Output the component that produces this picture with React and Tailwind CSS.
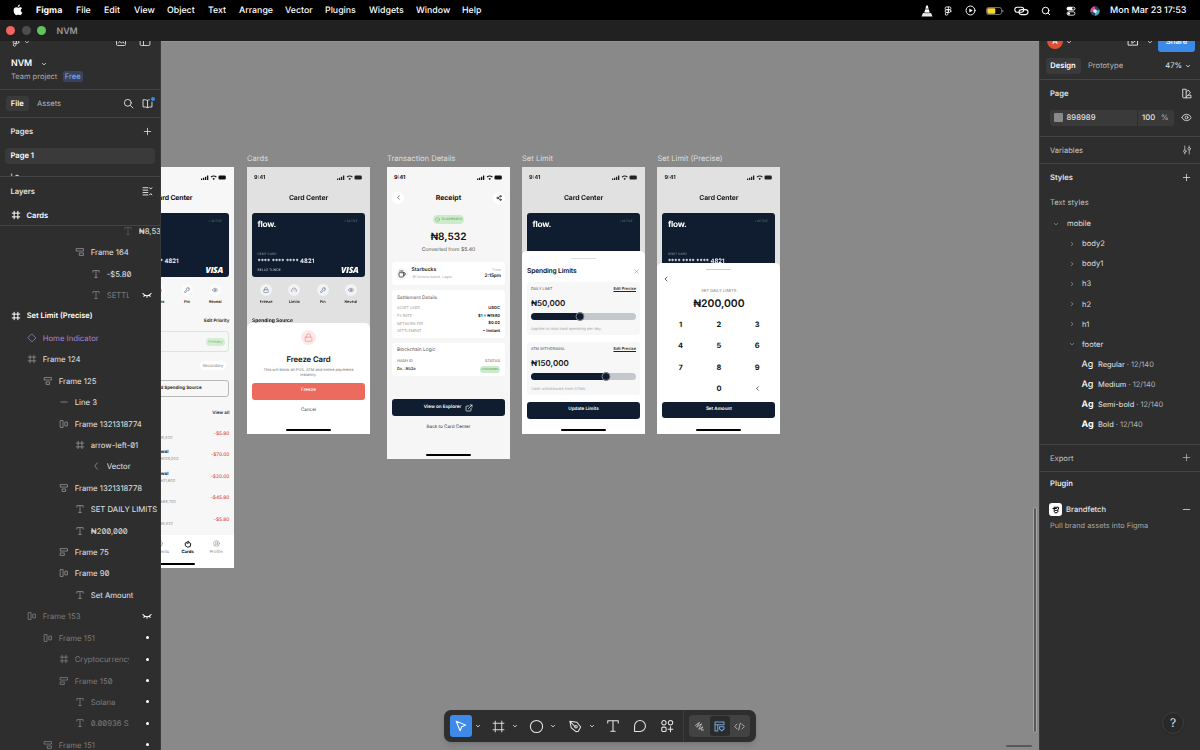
import React from 'react';
import clsx from 'clsx';
import { ChevronLeft, Eye, Frame, KeyRound, Lock, Plus, Minus, Search, Share2, ExternalLink, Coffee, X, CircleCheck, MapPin, CircleUserRound, Gauge } from 'lucide-react';

const MENU = [
  ['Figma', 'w-[40px] font-bold'],
  ['File', 'w-[28px]'],
  ['Edit', 'w-[30px]'],
  ['View', 'w-[33px]'],
  ['Object', 'w-[41px]'],
  ['Text', 'w-[31px]'],
  ['Arrange', 'w-[46px]'],
  ['Vector', 'w-[40px]'],
  ['Plugins', 'w-[44px]'],
  ['Widgets', 'w-[47px]'],
  ['Window', 'w-[46px]'],
  ['Help', 'w-[30px]'],
];

const LAYERS = [
  { depth: 7, icon: 'text', name: '₦8,532', dimIcon: true },
  { depth: 4, icon: 'right', name: 'Frame 164' },
  { depth: 5, icon: 'text', name: '-$5.80' },
  { depth: 5, icon: 'text', name: 'SETTLEMENT', hidden: 'eye' },
  { depth: 0, icon: 'frame', name: 'Set Limit (Precise)', root: true },
  { depth: 1, icon: 'diamond', name: 'Home Indicator', component: true },
  { depth: 1, icon: 'frame', name: 'Frame 124' },
  { depth: 2, icon: 'center', name: 'Frame 125' },
  { depth: 3, icon: 'line', name: 'Line 3' },
  { depth: 3, icon: 'row', name: 'Frame 1321318774' },
  { depth: 4, icon: 'frame', name: 'arrow-left-01' },
  { depth: 5, icon: 'vector', name: 'Vector' },
  { depth: 3, icon: 'center', name: 'Frame 1321318778' },
  { depth: 4, icon: 'text', name: 'SET DAILY LIMITS' },
  { depth: 4, icon: 'text', name: '₦200,000' },
  { depth: 3, icon: 'left', name: 'Frame 75' },
  { depth: 3, icon: 'row', name: 'Frame 90' },
  { depth: 4, icon: 'text', name: 'Set Amount' },
  { depth: 1, icon: 'row', name: 'Frame 153', hidden: 'eye' },
  { depth: 2, icon: 'row', name: 'Frame 151', hidden: 'dot' },
  { depth: 3, icon: 'frame', name: 'Cryptocurrency', hidden: 'dot' },
  { depth: 3, icon: 'left', name: 'Frame 150', hidden: 'dot' },
  { depth: 4, icon: 'text', name: 'Solana', hidden: 'dot' },
  { depth: 4, icon: 'text', name: '0.00936 SOL', hidden: 'dot' },
  { depth: 2, icon: 'right', name: 'Frame 151', hidden: 'dot' },
];

function Svg({ size = 10, box = 16, sw = 1.3, className, children }) {
  return (
    <svg width={size} height={size} viewBox={`0 0 ${box} ${box}`} fill="none" stroke="currentColor" strokeWidth={sw} strokeLinecap="round" strokeLinejoin="round" className={clsx('shrink-0', className)}>
      {children}
    </svg>
  );
}

function Caret({ className }) {
  return (
    <Svg size={6} box={8} sw={1.2} className={className}>
      <path d="M2 3.200 4 5.200 6 3.200" />
    </Svg>
  );
}

const LAYER_SHAPES = {
  text: <path d="M3 5V2.500h10V5M8 2.500v11M6 13.500h4" />,
  frame: <path d="M5 2v12M11 2v12M2 5h12M2 11h12" />,
  diamond: <path d="M8 1.800 14.200 8 8 14.200 1.800 8z" />,
  center: <path d="M2.500 2.500h11v4h-11zM5.500 9.500h5v4h-5z" />,
  left: <path d="M2.500 2.500h11v4h-11zM2.500 9.500h6v4h-6z" />,
  right: <path d="M2.500 2.500h11v4h-11zM7.500 9.500h6v4h-6z" />,
  row: <path d="M2.500 2.500h4v11h-4zM10 5h3.500v6H10z" />,
  line: <path d="M3 8h10" />,
  vector: <path d="M10 3 6 8l4 5" />,
};

function ClosedEye() {
  return (
    <Svg sw={1.7} className="text-white">
      <path d="M1.500 5.500c3.500 5 9.500 5 13 0M4.200 8.500l-1.200 1.700M8 9.500v2M11.800 8.500l1.200 1.700" />
    </Svg>
  );
}

function LayerRow({ layer }) {
  const { depth, icon, name, root, component, hidden, dimIcon } = layer;
  return (
    <div className="flex h-[21.430px] shrink-0 items-center" style={{ paddingLeft: 11 + depth * 16 }}>
      <Svg className={clsx(root ? 'text-white' : component ? 'text-[#a284c8]' : dimIcon ? 'text-[#5c5c5c]' : hidden ? 'text-[#858585]' : 'text-[#9a9a9a]')} sw={root ? 1.6 : 1.2}>
        {LAYER_SHAPES[icon]}
      </Svg>
      <span
        className={clsx(
          'ml-[5.700px] min-w-0 flex-1 overflow-hidden whitespace-nowrap leading-[14px]',
          root ? 'text-[7.500px] font-semibold text-white' : 'text-[7.750px]',
          component && 'text-[#a985d4]',
          hidden ? 'text-[#7b7b7b]' : !root && !component && 'text-[#e4e4e4]'
        )}
      >
        {name}
      </span>
      {hidden && (
        <span className="ml-[13px] flex w-[18px] shrink-0 items-center">
          {hidden === 'eye' ? <ClosedEye /> : <span className="ml-[3.500px] size-[3px] rounded-full bg-white" />}
        </span>
      )}
    </div>
  );
}

function MenuBar() {
  return (
    <div className="flex h-5 shrink-0 items-center bg-black pt-px text-[8.800px] font-medium text-white">
      <svg width="10" height="12" viewBox="0 0 24 28" fill="#fff" className="mr-[13px] mb-px ml-[13px]">
        <path d="M16.500 1c.2 3-2.300 5.700-5 5.700C11.200 4 13.700 1.300 16.500 1zM21.700 9.600c-2 1.200-3.100 2.900-3.100 5 0 2.500 1.500 4.600 3.800 5.500-.9 2.800-3.200 6.400-5.600 6.400-1.600 0-2.200-1-4.300-1s-2.800 1-4.300 1C5 26.500 1.500 20.700 1.500 15.400c0-5 3.200-7.800 6.400-7.800 2 0 3.500 1.300 4.700 1.300 1.100 0 2.900-1.400 5.100-1.400 1 0 3 .4 4 2.100z" />
      </svg>
      {MENU.map(([label, cls]) => (
        <span key={label} className={clsx('shrink-0 whitespace-nowrap', cls)}>{label}</span>
      ))}
      <div className="ml-auto flex items-center pr-[12px]">
        <svg width="12" height="12" viewBox="0 0 24 24" className="mr-[10px]">
          <path d="M10.500 1h3l1.400 5H9.100zM8 10h8l1.200 4H6.800z" fill="#fff" />
          <path d="M9.100 6h5.800L16 10H8z" fill="#aaa" />
          <path d="M4 16h16l3 7H1z" fill="#e8e8e8" />
          <path d="M6.800 14h10.400v3H6.800z" fill="#999" />
        </svg>
        <Svg size={10} sw={1.300} className="mr-[12px]">
          <path d="M8 1.500H5.500a2.200 2.200 0 0 0 0 4.400H8zM8 1.500h2.500a2.200 2.200 0 0 1 0 4.400H8M8 5.900H5.500a2.200 2.200 0 0 0 0 4.400H8zM8 10.300H5.500a2.200 2.200 0 1 0 2.500 2.200z" />
          <circle cx="10.500" cy="8.100" r="2.200" />
        </Svg>
        <Svg size={11} sw={1.400} className="mr-[10px]">
          <circle cx="8" cy="8" r="6.500" />
          <path d="M6.300 5v6l5-3z" fill="currentColor" stroke="none" />
        </Svg>
        <svg width="18" height="8" viewBox="0 0 18 8" className="mr-[10.500px]">
          <rect x=".5" y=".5" width="15" height="7" rx="2" fill="none" stroke="#8a8a8a" strokeWidth=".8" />
          <rect x="1.300" y="1.300" width="8" height="5.400" rx="1" fill="#fdd835" />
          <path d="M16.800 2.800v2.400" stroke="#8a8a8a" />
        </svg>
        <svg width="15" height="10" viewBox="0 0 15 10" fill="none" stroke="#fff" strokeWidth="1.100" className="mr-[11.500px]">
          <rect x=".8" y="1.200" width="9" height="5" rx="2.500" />
          <rect x="5" y="3.600" width="9" height="5" rx="2.500" />
        </svg>
        <Search size={10} strokeWidth={2.400} className="mr-[15px]" />
        <svg width="10" height="10" viewBox="0 0 16 16" className="mr-[14px]">
          <rect x="1" y="1" width="14" height="6" rx="3" fill="#fff" />
          <circle cx="11.800" cy="4" r="2" fill="#222" />
          <rect x="1.700" y="9.200" width="12.600" height="5.500" rx="2.700" fill="none" stroke="#fff" strokeWidth="1.300" />
          <circle cx="4.500" cy="12" r="2" fill="#fff" />
        </svg>
        <svg width="10" height="10" viewBox="0 0 16 16" className="mr-[10.500px]">
          <circle cx="8" cy="8" r="7.500" fill="#31405e" />
          <path d="M8 .5A7.500 7.500 0 0 0 1 10l7-2z" fill="#d2508f" />
          <path d="M8 15.500A7.500 7.500 0 0 0 15 6L8 8z" fill="#3bb6bd" />
          <circle cx="8" cy="8" r="3" fill="#dfe9ff" />
        </svg>
        <span className="w-[54px] text-[9px] whitespace-nowrap">Mon Mar 23</span>
        <span className="w-[24px] text-[9px]">17:53</span>
      </div>
    </div>
  );
}

function TitleBar() {
  return (
    <div className="flex h-[21px] shrink-0 items-center bg-[#212121] pl-[6px]">
      <span className="size-[9px] rounded-full bg-[#ee6561]" />
      <span className="ml-[6.500px] size-[9px] rounded-full bg-[#4c4c4c]" />
      <span className="ml-[6.500px] size-[9px] rounded-full bg-[#5ec45c]" />
      <span className="mt-[2px] ml-[10.500px] text-[8.800px] font-semibold text-[#9b9b9b]">NVM</span>
    </div>
  );
}

function LeftPanel() {
  return (
    <aside className="flex w-[161px] shrink-0 flex-col overflow-hidden border-r border-[#393939] bg-[#2e2e2e] text-[7.600px] text-[#e4e4e4] slashed-zero">
      <div className="flex h-[49px] shrink-0 flex-col border-b border-[#444]">
        <div className="flex h-[10px] shrink-0 items-start overflow-hidden pl-[11px] text-[#d0d0d0]">
          <Svg size={10} sw={1.500} className="-mt-[4px]">
            <path d="M8 1.500H5.500a2.200 2.200 0 0 0 0 4.400H8zM8 5.900H5.500a2.200 2.200 0 0 0 0 4.400H8zM8 10.300H5.500a2.200 2.200 0 1 0 2.500 2.200z" />
            <circle cx="10.500" cy="8.100" r="2.200" />
          </Svg>
          <Caret className="mt-[-2.500px] ml-[3px]" />
          <Svg size={12} sw={1.300} className="mt-[-6px] ml-[84.500px]">
            <rect x="2" y="2" width="12" height="12" rx="1.500" />
            <path d="M4 11l2.500-2.500L8.500 11l2-2 1.500 2" />
          </Svg>
          <Svg size={12} sw={1.300} className="mt-[-6px] ml-[12px]">
            <rect x="1.500" y="2" width="13" height="12" rx="1.500" />
            <path d="M6 2v12" />
          </Svg>
        </div>
        <div className="mt-[5.500px] flex h-[14px] items-center pl-[11px]">
          <span className="w-[30px] text-[8.800px] font-semibold text-white">NVM</span>
          <Caret />
        </div>
        <div className="flex h-[12px] items-center pl-[11px]">
          <span className="w-[51.500px] whitespace-nowrap text-[7.500px] text-[#ababab]">Team project</span>
          <span className="flex h-[11px] w-[20.500px] items-center justify-center rounded-[2.500px] bg-[#384361] text-[7.600px] text-[#82b0ee]">Free</span>
        </div>
      </div>
      <div className="flex h-[28px] shrink-0 items-center border-b border-[#444] pl-[6px]">
        <span className="flex h-[15.500px] w-[22.500px] items-center justify-center rounded-[3px] bg-[#3a3a3a] pt-px font-semibold text-white">File</span>
        <span className="ml-[8.500px] pt-px text-[#b3b3b3]">Assets</span>
        <Svg size={11} sw={1.300} className="ml-auto">
          <circle cx="7" cy="7" r="5" />
          <path d="m11 11 3.500 3.500" />
        </Svg>
        <span className="relative mr-[7px] ml-[8px]">
          <Svg size={11} sw={1.300}>
            <path d="M8 3.500C6.500 2.500 4 2.500 1.500 2.500v10.500c2.500 0 5 0 6.500 1 1.500-1 4-1 6.500-1V6M8 3.500V14M8 3.500c.8-.7 1.700-.9 2.700-1" />
          </Svg>
          <span className="absolute top-[-1px] right-[-1.500px] size-[3.500px] rounded-full bg-[#2f8ff5]" />
        </span>
      </div>
      <div className="flex h-[59px] shrink-0 flex-col overflow-hidden border-b border-[#444]">
        <div className="flex h-[27.500px] shrink-0 items-center justify-between pr-[7px] pl-[10.500px] font-semibold">
          Pages
          <Plus size={11} strokeWidth={1.700} />
        </div>
        <div className="mt-[2px] ml-[5px] flex h-[16px] w-[150px] shrink-0 items-center rounded-[3px] bg-[#3a3a3a] pl-[5.500px] font-semibold text-white">Page 1</div>
        <div className="mt-[5.500px] flex h-[16px] shrink-0 items-center pl-[10.500px]">Lo</div>
      </div>
      <div className="flex h-[28px] shrink-0 items-center justify-between pr-[7px] pl-[10.500px] font-semibold">
        <span className="pt-px">Layers</span>
        <Svg size={11} sw={1.400}>
          <path d="M1.500 2.500h7M1.500 6h7M1.500 9.500h7M1.500 13h7M11 2.500l1.700 2 1.700-2M11 13l1.700-2 1.700 2" />
        </Svg>
      </div>
      <div className="flex h-[21px] shrink-0 items-center border-b border-[#444] pl-[11px] font-semibold text-white">
        <Svg sw={1.600}>{LAYER_SHAPES.frame}</Svg>
        <span className="ml-[5.500px] pt-px">Cards</span>
      </div>
      <div className="flex min-h-0 flex-1 flex-col overflow-hidden">
        <div className="-mt-[6px] flex flex-col">
          {LAYERS.map((layer, i) => <LayerRow key={i} layer={layer} />)}
        </div>
      </div>
    </aside>
  );
}

function StyleFolder({ name, open, nested }) {
  return (
    <div className={clsx('flex h-[20.050px] shrink-0 items-center text-[7.600px] text-[#dedede]', nested ? 'pl-[29px]' : 'pl-[13px]')}>
      <Caret className={clsx('text-[#8c8c8c]', !open && '-rotate-90')} />
      <span className={clsx('pt-px', nested ? 'ml-[7px]' : 'ml-[8px]')}>{name}</span>
    </div>
  );
}

function RightPanel() {
  const weights = [['Regular', 'font-normal'], ['Medium', 'font-medium'], ['Semi-bold', 'font-semibold'], ['Bold', 'font-bold']];
  return (
    <aside className="relative flex w-[161px] shrink-0 flex-col overflow-hidden border-l border-[#3a3a3a] bg-[#2e2e2e] text-[7.600px] text-[#e4e4e4]">
      <div className="flex h-[39px] shrink-0 flex-col border-b border-[#444]">
        <div className="flex h-[14px] shrink-0 items-start overflow-hidden pl-[7px]">
          <span className="-mt-[8px] flex size-[16px] shrink-0 items-center justify-center rounded-full bg-[#dd4f33] text-[8px] text-white">A</span>
          <Caret className="mt-[-2px] ml-[3px]" />
          <Svg size={12} sw={1.300} className="mt-[-6px] ml-[55px]">
            <path d="M2 3.500h12v10H2zM6.500 6v5l4-2.500z" />
          </Svg>
          <Caret className="mt-[-2px] ml-[8px]" />
          <span className="-mt-[9px] ml-[5px] flex h-[20px] w-[37px] items-center justify-center rounded-[3px] bg-[#3b8ae8] text-[7.800px] font-medium text-white">Share</span>
        </div>
        <div className="mt-[3px] flex h-[15.500px] items-center pr-[9px] pl-[5.500px]">
          <span className="flex h-full w-[35px] items-center justify-center rounded-[3px] bg-[#3a3a3a] font-semibold text-white">Design</span>
          <span className="ml-[7.500px] text-[#b3b3b3]">Prototype</span>
          <span className="mr-[3px] ml-auto">47%</span>
          <Caret />
        </div>
      </div>
      <div className="flex h-[56.500px] shrink-0 flex-col border-b border-[#444] pr-[8px] pl-[10px]">
        <div className="flex h-[27px] items-center justify-between font-semibold">
          Page
          <Svg size={11} sw={1.300}>
            <path d="M3 1.800h4.500v12.500H3.500a1 1 0 0 1-1-1V2.300zM7.500 6l3-3 3.300 4-6.300 6M10.500 10.500h4v3.800h-7" />
          </Svg>
        </div>
        <div className="mt-[2.500px] flex h-[16px] items-center">
          <div className="flex h-full w-[86.500px] items-center rounded-l-[3px] bg-[#3a3a3a] pl-[3.500px]">
            <span className="mr-[3.500px] size-[9.500px] rounded-[1px] bg-[#898989]" />
            <span className="text-[7.700px] font-medium">898989</span>
          </div>
          <div className="ml-px flex h-full w-[36px] items-center justify-between rounded-r-[3px] bg-[#3a3a3a] pr-[5px] pl-[4.500px]">
            <span className="text-[7.700px] font-medium">100</span>
            <span className="text-[#b3b3b3]">%</span>
          </div>
          <Eye size={11} strokeWidth={1.800} className="ml-auto" />
        </div>
      </div>
      <div className="flex h-[27.500px] shrink-0 items-center justify-between border-b border-[#444] pr-[8px] pl-[10px] text-[#c4c4c4]">
        <span className="pt-px">Variables</span>
        <Svg size={10} sw={1.300}>
          <path d="M4.500 1.500V8M4.500 12v2.500M11.500 1.500V4M11.500 8v6.500" />
          <circle cx="4.500" cy="10" r="2" />
          <circle cx="11.500" cy="6" r="2" />
        </Svg>
      </div>
      <div className="flex h-[280.500px] shrink-0 flex-col border-b border-[#444]">
        <div className="flex h-[27px] shrink-0 items-center justify-between pr-[8px] pl-[10px] font-semibold">
          Styles
          <Plus size={11} strokeWidth={1.700} />
        </div>
        <div className="flex h-[22.500px] shrink-0 items-center pl-[10px] text-[#bdbdbd]">Text styles</div>
        <StyleFolder name="mobile" open />
        {['body2', 'body1', 'h3', 'h2', 'h1'].map(name => <StyleFolder key={name} name={name} nested />)}
        <StyleFolder name="footer" nested open />
        {weights.map(([name, cls]) => (
          <div key={name} className="flex h-[20.050px] shrink-0 items-center pt-px pl-[41.500px]">
            <span className={clsx('w-[16.500px] text-[9px] text-white', cls)}>Ag</span>
            <span className="text-[7.450px] whitespace-nowrap">{name} <span className="text-[#b0b0b0]">· 12/140</span></span>
          </div>
        ))}
      </div>
      <div className="flex h-[27.500px] shrink-0 items-center justify-between border-b border-[#444] pr-[8px] pl-[10px] text-[#c4c4c4]">
        <span className="pt-px">Export</span>
        <Plus size={11} strokeWidth={1.500} />
      </div>
      <div className="flex h-[24px] shrink-0 items-center pl-[10px] font-semibold">Plugin</div>
      <div className="mt-[6px] flex h-[15px] shrink-0 items-center pr-[8px] pl-[9px] font-medium">
        <span className="mr-[4px] flex size-[13px] items-center justify-center rounded-[3px] bg-white text-black">
          <Svg size={8} sw={2}>
            <path d="M4 2.500h9v4L10.500 8l2 2L10 13.500H5.500M2 5h7M4.500 5v6M7 9h2" />
          </Svg>
        </span>
        <span>Brandfetch</span>
        <Minus size={11} strokeWidth={1.700} className="ml-auto" />
      </div>
      <div className="mt-[1.500px] flex h-[14px] shrink-0 items-center pt-px pl-[10px] text-[7.400px] whitespace-nowrap text-[#a9a9a9]">Pull brand assets into Figma</div>
      <div className="absolute right-[16px] bottom-[16px] flex size-[22px] items-center justify-center rounded-full border border-[#3d3d3d] bg-[#292929] text-[12px] shadow">?</div>
    </aside>
  );
}

/* ---------- phone mockups ---------- */

function StatusBar() {
  return (
    <div className="flex h-[20.500px] shrink-0 items-center justify-between pr-[8px] pl-[7px] text-[5.500px] font-bold">
      9:41
      <svg width="25" height="5" viewBox="0 0 25 5" fill="currentColor">
        <path d="M0 3.500h1.300V5H0zM2 2.700h1.300V5H2zM4 1.700h1.300V5H4zM6 .6h1.300V5H6zM12.700 5l-1.200-1.300a1.700 1.700 0 0 1 2.400 0zM9.600 1.700a4.400 4.400 0 0 1 6.200 0l-.8.9a3.200 3.200 0 0 0-4.600 0z" />
        <rect x="17.500" y=".6" width="7.300" height="3.800" rx="1.200" />
      </svg>
    </div>
  );
}

function ScreenTitle({ children }) {
  return <div className="flex h-[20px] shrink-0 items-center justify-center text-[6.900px] font-bold tracking-[-0.120px]">{children}</div>;
}

// rows: how much of the card shows above the sheet (1 = logo, 2 = number, 3 = all)
function BankCard({ rows = 3 }) {
  return (
    <div className="mx-[5px] mt-[5.500px] flex h-[63.500px] shrink-0 flex-col rounded-[3px] bg-[#101d30] px-[5.500px] text-white">
      <div className="mt-[5px] flex h-[12px] items-center justify-between">
        <span className="pt-px text-[8.400px] font-bold tracking-[-0.250px]">flow.</span>
        <span className="-mt-[6px] mr-[2px] text-[3px] text-[#4d7f66]">• ACTIVE</span>
      </div>
      {rows > 1 && (
        <>
          <div className="mt-[21.500px] text-[3.200px] leading-[4px] text-[#8c95a3]">DEBIT CARD</div>
          <div className="mt-[2px] flex h-[8px] items-center text-[6px] font-semibold whitespace-nowrap">
            <span className="mr-[1.500px] pt-[1px] text-[5.900px]">**** **** ****</span> 4821
          </div>
        </>
      )}
      {rows > 2 && (
        <div className="flex h-[11px] items-start justify-between">
          <span className="mt-[2px] text-[3.400px] leading-[4px] text-[#b9c0cb]">BELLO TUNDE</span>
          <span className="mr-px font-['Open_Sans'] text-[8.500px] leading-[9px] font-extrabold tracking-[-0.300px] italic">VISA</span>
        </div>
      )}
    </div>
  );
}

function CardActions() {
  const actions = [['Freeze', Lock], ['Limits', Gauge], ['Pin', KeyRound], ['Reveal', Eye]];
  return (
    <div className="mx-[5px] mt-[7.500px] grid h-[20px] shrink-0 grid-cols-4">
      {actions.map(([label, Icon]) => (
        <div key={label} className="flex flex-col items-center text-[3.900px] font-semibold">
          <span className="mb-[2.500px] flex size-[12px] shrink-0 items-center justify-center rounded-full bg-white/60">
            <Icon size={6} strokeWidth={2} color="#4e6289" />
          </span>
          <span className="leading-[5px]">{label}</span>
        </div>
      ))}
    </div>
  );
}

function HomeBar({ className }) {
  return <div className={clsx('mx-auto mt-auto h-[1.800px] w-[45px] shrink-0 rounded-full bg-black', className)} />;
}

function DarkButton({ children, className }) {
  return (
    <div className={clsx('mx-[5px] flex shrink-0 items-center justify-center rounded-[3px] bg-[#101d30] pt-px text-[4.600px] font-semibold text-white', className)}>
      {children}
    </div>
  );
}

// dimmed card screen with a bottom sheet over it
function SheetScreen({ cardRows, backdrop, sheetClass, children }) {
  return (
    <div className="relative flex h-full flex-col bg-[#e1e1e1] text-[#222]">
      <div className="flex flex-col blur-[0.400px]">
        <StatusBar />
        <ScreenTitle>Card Center</ScreenTitle>
        <BankCard rows={cardRows} />
        {backdrop}
      </div>
      <div className={clsx('absolute inset-x-0 bottom-0 flex flex-col rounded-t-[5px] bg-white text-[#111]', sheetClass)}>{children}</div>
    </div>
  );
}

function CardsHome() {
  const rows = [
    ['Starbucks', '₦8,532', '-$5.80', 'pr-[17px]', 'pr-[30px]'],
    ['ATM Withdrawal', '₦109,000', '-$70.00', 'pr-[11px]', 'pr-[21px]'],
    ['ATM Withdrawal', '₦31,600', '-$20.00', 'pr-[14px]', 'pr-[21px]'],
    ['Amazon', '₦68,700', '-$45.80', 'pr-[13.500px]', 'pr-[30px]'],
    ['Netflix', '₦8,532', '-$5.80', 'pr-[16.500px]', 'pr-[30px]'],
  ];
  return (
    <div className="flex h-full flex-col bg-[#f7f7f7] text-[#111]">
      <StatusBar />
      <ScreenTitle>Card Center</ScreenTitle>
      <BankCard />
      <CardActions />
      <div className="mt-[12.500px] flex h-[10px] items-center justify-end pr-[5px] text-[4.500px] font-semibold">Edit Priority</div>
      <div className="mx-[5px] mt-[4.500px] flex h-[21px] shrink-0 items-center justify-end rounded-[3px] border border-[#d3ead5] pr-[3.500px]">
        <span className="flex h-[8.500px] w-[19px] items-center justify-center rounded-full bg-[#d3efd2] text-[3.900px] text-[#7fb983]">Primary</span>
      </div>
      <div className="mt-[8.500px] mr-[2.500px] ml-auto flex h-[9px] w-[26px] items-center justify-center rounded-full bg-white pt-px text-[4.100px] text-[#777] -translate-x-[6px]">Secondary</div>
      <div className="mx-[5px] mt-[10.500px] flex h-[17px] shrink-0 items-center justify-center rounded-[3px] border border-[#b9b9b9] pt-px text-[4.500px] font-semibold whitespace-nowrap">
        <span className="pl-[6px]">+ Add Spending Source</span>
      </div>
      <div className="mt-[12.500px] flex h-[10px] items-center justify-end pr-[5px] text-[4.600px] font-semibold text-[#1c2f54]">View all</div>
      <div className="mt-[3.500px] flex flex-col">
        {rows.map(([name, sub, amount, subPad, namePad], i) => (
          <div key={i} className="flex h-[21.500px] items-center">
            <div className="flex min-w-0 flex-1 flex-col items-end whitespace-nowrap">
              <span className={clsx('text-[4.500px] leading-[7px] font-bold', namePad)}>{name}</span>
              <span className={clsx('text-[4px] leading-[6px] text-[#a2a2a2]', subPad)}>{sub}</span>
            </div>
            <span className="mr-[5px] ml-[16px] w-[24px] shrink-0 text-right text-[4.800px] font-medium text-[#e0524c]">{amount}</span>
          </div>
        ))}
      </div>
      <div className="mt-auto flex h-[32.500px] shrink-0 flex-col bg-white">
        <div className="ml-[5px] grid w-[114px] grid-cols-4 pt-[5px] text-[4.300px] text-[#8d8d8d]">
          {['Home', 'Payments', 'Cards', 'Profile'].map(tab => (
            <div key={tab} className={clsx('flex flex-col items-center leading-[6px]', tab === 'Cards' && 'font-bold text-black')}>
              {tab === 'Cards' ? (
                <Svg size={8} sw={1.800} className="mb-[2px]">
                  <path d="M3 6l6-3.500 1.500 3L13.500 7l-1 6-5 1.500-4-2.500zM6 6.500l4-1" />
                </Svg>
              ) : (
                <CircleUserRound size={7} strokeWidth={1.700} className="mb-[3px]" />
              )}
              {tab}
            </div>
          ))}
        </div>
        <HomeBar className="mb-[3px]" />
      </div>
    </div>
  );
}

function FreezeScreen() {
  return (
    <SheetScreen
      sheetClass="h-[111px]"
      backdrop={
        <>
          <CardActions />
          <div className="mt-[11.500px] pl-[5px] text-[4.900px] leading-[10px] font-bold">Spending Source</div>
        </>
      }
    >
      <span className="mx-auto mt-[7px] flex size-[15px] shrink-0 items-center justify-center rounded-full bg-[#fdeae8]">
        <Lock size={9} strokeWidth={1.600} color="#ef7d75" />
      </span>
      <div className="mt-[9px] text-center text-[7.800px] leading-[10px] font-semibold tracking-[-0.100px]">Freeze Card</div>
      <div className="mt-[3.500px] text-center text-[3.900px] leading-[5.200px] text-[#777]">This will block all POS, ATM and online payments<br />instantly.</div>
      <div className="mx-[5px] mt-[5.500px] flex h-[16.500px] shrink-0 items-center justify-center rounded-[3px] bg-[#ed6a5e] pt-px text-[4.600px] font-medium text-white">Freeze</div>
      <div className="mt-[7.500px] text-center text-[4.600px] leading-[8px] text-[#444]">Cancel</div>
      <HomeBar className="mb-[2.500px]" />
    </SheetScreen>
  );
}

function ReceiptScreen() {
  const details = [['ASSET USED', 'USDC'], ['FX RATE', '$1 = ₦1580'], ['NETWORK FEE', '$0.02'], ['SETTLEMENT', '~ Instant']];
  return (
    <div className="flex h-full flex-col bg-[#f6f6f6] text-[#111]">
      <StatusBar />
      <div className="flex h-[20px] shrink-0 items-center justify-between px-[5px] text-[6.900px] font-bold">
        <span className="flex size-[12px] items-center justify-center rounded-full bg-white"><ChevronLeft size={7} /></span>
        Receipt
        <span className="flex size-[12px] items-center justify-center rounded-full bg-white"><Share2 size={6} strokeWidth={2.400} /></span>
      </div>
      <div className="mx-auto mt-[7px] flex h-[9px] w-[31px] items-center justify-center gap-[1.500px] rounded-full bg-[#ccebc9] text-[3.900px] text-[#63a765]">
        <CircleCheck size={5} />Successful
      </div>
      <div className="mt-[7.500px] text-center text-[10.100px] leading-[13px] font-semibold">₦8,532</div>
      <div className="mt-[2px] text-center text-[5.100px] leading-[8px] text-[#555]">Converted from $5.40</div>
      <div className="mx-[5px] mt-[8px] flex h-[23px] shrink-0 items-center rounded-[3px] bg-white pr-[4px] pl-[4px]">
        <span className="mr-[3.500px] flex size-[12px] items-center justify-center rounded-full bg-[#f6f6f6]"><Coffee size={8} strokeWidth={2} /></span>
        <div className="flex flex-col">
          <span className="text-[5px] leading-[7px] font-semibold">Starbucks</span>
          <span className="flex items-center gap-[1px] text-[3.500px] leading-[6px] text-[#a5a5a5]"><MapPin size={4} />Victoria Island, Lagos</span>
        </div>
        <div className="ml-auto flex flex-col text-right">
          <span className="text-[3.800px] leading-[6px] text-[#aaa]">Time</span>
          <span className="text-[4.700px] leading-[7px] font-semibold">2:15pm</span>
        </div>
      </div>
      <div className="mx-[5px] mt-[5px] flex h-[47.500px] shrink-0 flex-col rounded-[3px] bg-white px-[5px] pt-[3.500px]">
        <div className="mb-[2px] text-[4.700px] leading-[8px] text-[#555]">Settlement Details</div>
        {details.map(([k, v]) => (
          <div key={k} className="flex h-[7.800px] items-center justify-between text-[3.700px] text-[#999]">
            {k}
            <span className="text-[4.100px] font-semibold text-[#111]">{v}</span>
          </div>
        ))}
      </div>
      <div className="mx-[5px] mt-[5px] flex h-[33.500px] shrink-0 flex-col rounded-[3px] bg-white px-[5px] pt-[3.500px]">
        <div className="mb-[3.500px] text-[4.800px] leading-[8px] text-[#555]">Blockchain Logic</div>
        <div className="flex h-[7px] items-center justify-between text-[3.900px] text-[#555]">HASH ID<span>STATUS</span></div>
        <div className="flex h-[9px] items-center justify-between text-[4.100px] font-medium">
          0x...9b2e
          <span className="flex h-[6.500px] w-[20px] items-center justify-center rounded-full bg-[#ccebc9] text-[2.800px] text-[#63a765]">CONFIRMED</span>
        </div>
      </div>
      <DarkButton className="mt-[22.500px] h-[17.500px] gap-[4px]">View on Explorer<ExternalLink size={8} strokeWidth={2} className="-mt-px" /></DarkButton>
      <div className="mt-[7.500px] text-center text-[4.600px] leading-[8px] text-[#333]">Back to Card Center</div>
      <HomeBar className="mb-[3px]" />
    </div>
  );
}

function LimitBox({ label, amount, note, percent, className }) {
  return (
    <div className={clsx('mx-[5px] flex h-[53px] shrink-0 flex-col rounded-[3px] bg-[#f7f7f7] px-[4px]', className)}>
      <div className="mt-[3.500px] flex h-[7px] items-center justify-between text-[3.700px] text-[#555]">
        {label}
        <span className="text-[4px] font-medium text-[#222] underline decoration-[0.500px]">Edit Precise</span>
      </div>
      <div className="mt-[5.500px] text-[8px] leading-[11px] font-semibold">{amount}</div>
      <div className="relative mt-[3.500px] h-[7.500px] rounded-full bg-[#c4c8cc]">
        <div className="h-full rounded-full bg-[#101d30]" style={{ width: `${percent}%` }} />
        <span className="absolute top-[-0.800px] size-[9px] -translate-x-1/2 rounded-full border-[0.500px] border-[#7e8793] bg-[#101d30]" style={{ left: `${percent}%` }} />
      </div>
      <div className="mt-[5.500px] text-[3.900px] leading-[6px] text-[#aaa]">{note}</div>
    </div>
  );
}

function LimitScreen() {
  return (
    <SheetScreen cardRows={1} sheetClass="h-[182.500px]">
      <div className="mx-auto mt-[6.500px] h-[1px] w-[25px] shrink-0 rounded-full bg-[#ddd]" />
      <div className="mt-[7.500px] flex h-[10px] shrink-0 items-center justify-between px-[5px] text-[6.700px] font-semibold tracking-[-0.150px]">
        Spending Limits
        <X size={7} strokeWidth={1.500} color="#777" />
      </div>
      <LimitBox className="mt-[6px]" label="DAILY LIMIT" amount="₦50,000" percent={47} note="Applies to total card spending per day." />
      <LimitBox className="mt-[7px]" label="ATM WITHDRAWAL" amount="₦150,000" percent={71} note="Cash withdrawals from ATMs." />
      <DarkButton className="mt-[7px] h-[16.500px]">Update Limits</DarkButton>
      <HomeBar className="mb-[3px]" />
    </SheetScreen>
  );
}

function PreciseScreen() {
  const keys = ['1', '2', '3', '4', '5', '6', '7', '8', '9', '', '0', '<'];
  return (
    <SheetScreen cardRows={2} sheetClass="h-[171px]">
      <div className="mx-auto mt-[6px] h-[1px] w-[25px] shrink-0 rounded-full bg-[#ccc]" />
      <ChevronLeft size={8} strokeWidth={2} className="mt-[5px] ml-[4.500px] shrink-0" />
      <div className="mt-[5.500px] text-center text-[4.100px] leading-[6px] text-[#777]">SET DAILY LIMITS</div>
      <div className="mt-[3px] text-center text-[10.400px] leading-[14px] font-semibold">₦200,000</div>
      <div className="mx-[4px] mt-[3px] grid shrink-0 grid-cols-3">
        {keys.map((k, i) => (
          <span key={i} className="flex h-[21.200px] items-center justify-center text-[7.400px] font-bold">
            {k === '<' ? <ChevronLeft size={7} strokeWidth={2.300} /> : k}
          </span>
        ))}
      </div>
      <DarkButton className="mt-[3px] h-[16.500px]">Set Amount</DarkButton>
      <HomeBar className="mb-[3px]" />
    </SheetScreen>
  );
}

const FRAMES = [
  { label: '', cls: 'left-[-49.600px] h-[400.300px]', Screen: CardsHome },
  { label: 'Cards', cls: 'left-[86px] h-[266.300px]', Screen: FreezeScreen },
  { label: 'Transaction Details', cls: 'left-[226px] h-[291.500px]', Screen: ReceiptScreen },
  { label: 'Set Limit', cls: 'left-[361px] h-[266.300px]', Screen: LimitScreen },
  { label: 'Set Limit (Precise)', cls: 'left-[496.400px] h-[266.300px]', Screen: PreciseScreen },
];

function Toolbar() {
  return (
    <div className="absolute bottom-[8px] left-[283px] flex h-[32px] w-[312px] items-center rounded-[7px] bg-[#2e2e2e] pl-[6px] text-[#e6e6e6] shadow-md">
      <span className="mr-[3px] flex size-[21.500px] items-center justify-center rounded-[3px] bg-[#3d8ae8] text-white">
        <Svg size={14} sw={1.200}><path d="M2.500 2.500 13.500 7 8.800 8.800 7 13.500z" /></Svg>
      </span>
      <Caret className="mr-[11px]" />
      <Frame size={13} strokeWidth={1.700} />
      <Caret className="mr-[11px] ml-[7.500px]" />
      <Svg size={15} sw={1.100}><circle cx="8" cy="8" r="6.500" /></Svg>
      <Caret className="mr-[11.500px] ml-[6px]" />
      <Svg size={15} sw={1.100}>
        <path d="M2 2.500 9.500 3.500 13.500 8.500 11 13 8.500 13.500 3.500 9.500zM2 2.500l5.500 5.500" />
        <circle cx="8.500" cy="8.300" r="1.400" />
      </Svg>
      <Caret className="mr-[11.500px] ml-[6px]" />
      <Svg size={14} sw={1.200}><path d="M2 4.500V2h12v2.500M8 2v12M5.500 14h5" /></Svg>
      <Svg size={14} sw={1.200} className="ml-[13px]"><path d="M8 1.800A6.200 6.200 0 1 1 8 14.200H1.800V8A6.200 6.200 0 0 1 8 1.800z" /></Svg>
      <Svg size={14} sw={1.200} className="ml-[12.500px]">
        <circle cx="4.500" cy="4.300" r="2.500" />
        <circle cx="12" cy="4.300" r="2.500" />
        <rect x="2" y="9.300" width="5" height="5" rx="1.500" />
        <path d="M12 9v5.500M9.300 11.800h5.400" />
      </Svg>
      <span className="ml-[9px] h-full w-px bg-[#3c3c3c]" />
      <div className="ml-[5px] flex h-[21.500px] items-center rounded-[4px] bg-[#424242] text-[#bdbdbd]">
        <span className="flex w-[21px] justify-center">
          <Svg size={11} sw={1.300}><path d="M2 6.500 8 2 4 9 11 4 7 12 13 8.500 10 13h4" /></Svg>
        </span>
        <span className="flex h-[20px] w-[20px] items-center justify-center rounded-[3px] bg-[#2b2b2b] text-[#71a5dc]">
          <Svg size={11} sw={1.500}>
            <path d="M1.500 1.500h13v4h-13zM1.500 5.500v9h4v-9M8 8.500h6.500v3l-3.200 3L8 11.500z" />
          </Svg>
        </span>
        <span className="flex w-[20px] justify-center">
          <Svg size={11} sw={1.300}><path d="M4.500 4.500 1 8l3.500 3.500M11.500 4.500 15 8l-3.500 3.500M9.200 3 6.800 13" /></Svg>
        </span>
      </div>
    </div>
  );
}

function Canvas() {
  return (
    <main className="relative min-w-0 flex-1 overflow-hidden border-t border-[#939393] bg-[#898989]">
      {FRAMES.map(({ label, cls, Screen }) => (
        <div key={cls} className={clsx('absolute top-[125.400px] w-[123px]', cls)}>
          <span className="absolute top-[-14.400px] left-0 text-[7.600px] leading-[12px] whitespace-nowrap text-[#dcdcdc]">{label}</span>
          <div className="h-full overflow-hidden">
            <Screen />
          </div>
        </div>
      ))}
      <Toolbar />
      <span className="absolute right-[2.500px] bottom-[17px] h-[226px] w-[3.500px] rounded-full border-[0.500px] border-[#a5a5a5] bg-[#595959]" />
      <span className="absolute right-[7px] bottom-[3px] h-[2.500px] w-[26px] rounded-full bg-[#585858]" />
    </main>
  );
}

export default function App() {
  return (
    <div className="flex h-[750px] w-[1200px] flex-col overflow-hidden bg-[#2e2e2e] font-['Inter',sans-serif] [text-rendering:geometricPrecision]">
      <MenuBar />
      <TitleBar />
      <div className="flex min-h-0 flex-1">
        <LeftPanel />
        <Canvas />
        <RightPanel />
      </div>
    </div>
  );
}
